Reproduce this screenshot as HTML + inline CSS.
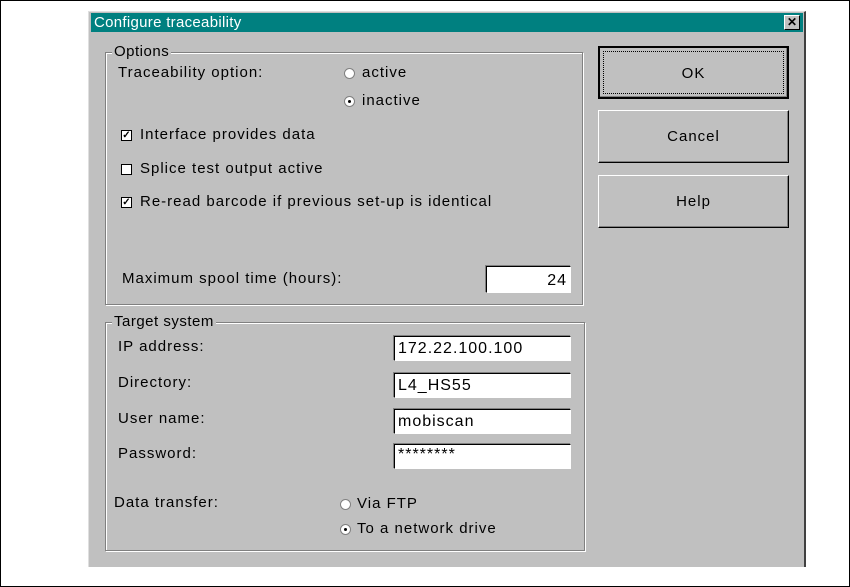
<!DOCTYPE html>
<html><head><style>
body{margin:0;width:850px;height:587px;background:#fff;position:relative;overflow:hidden;font-family:"Liberation Sans",Arial,sans-serif;font-size:15px;letter-spacing:1px;color:#000}
.frame{position:absolute;left:0;top:0;width:848px;height:585px;border:1px solid #000}
.dlg{position:absolute;left:88px;top:11px;width:715px;height:555px;background:#c0c0c0;border-left:1px solid #dfdfdf;border-top:1px solid #dfdfdf;border-right:2px solid #404040}
.title{position:absolute;left:2px;top:1px;width:712px;height:19px;background:#008080;color:#fff;font-size:15px;letter-spacing:0.3px;line-height:19px;padding-left:3px;box-sizing:border-box}
.x{position:absolute;right:3px;top:2px;width:14px;height:13px;background:#c0c0c0;border:1px solid;border-color:#fff #000 #000 #fff;color:#000;font-size:12px;letter-spacing:0;line-height:13px;text-align:center;font-weight:bold}
.grp{position:absolute;border:1px solid #808080;box-shadow:1px 1px 0 #fff, inset 1px 1px 0 #fff}
.leg{position:absolute;background:#c0c0c0;padding:0 2px;top:-9px;left:6px;line-height:16px;letter-spacing:0.5px}
.t{position:absolute;white-space:nowrap;line-height:20px}
.rb{position:absolute;width:11px;height:11px;border-radius:50%;background:#fff;border:1px solid #808080;box-sizing:border-box}
.rb.on::after{content:"";position:absolute;left:3px;top:3px;width:3px;height:3px;background:#000;border-radius:50%}
.cb{position:absolute;width:11px;height:11px;background:#fff;border:1px solid #000;box-sizing:border-box;font-size:10px;letter-spacing:0;line-height:9px;text-align:center;font-weight:bold}
.ed{position:absolute;background:#fff;border:1px solid;border-color:#000 #fff #fff #000;box-shadow:-1px -1px 0 #808080;box-sizing:border-box;line-height:24px;padding:0 3px;font-size:16px;letter-spacing:1px}
.btn{position:absolute;width:191px;height:53px;background:#c0c0c0;border:1px solid;border-color:#fff #000 #000 #fff;box-shadow:inset -1px -1px 0 #808080;box-sizing:border-box;text-align:center;line-height:51px}
</style></head><body>
<div class="frame"></div>
<div class="dlg">
<div class="title">Configure traceability<div class="x">✕</div></div>
</div>
<div class="grp" style="left:105px;top:52px;width:476px;height:251px"><span class="leg" style="left:6px">Options</span></div>
<div class="t" style="left:118px;top:63px">Traceability option:</div>
<div class="rb" style="left:344px;top:68px"></div><div class="t" style="left:362px;top:63px">active</div>
<div class="rb on" style="left:344px;top:96px"></div><div class="t" style="left:362px;top:91px">inactive</div>
<div class="cb" style="left:121px;top:130px">✓</div><div class="t" style="left:140px;top:125px">Interface provides data</div>
<div class="cb" style="left:121px;top:164px"></div><div class="t" style="left:140px;top:159px">Splice test output active</div>
<div class="cb" style="left:121px;top:197px">✓</div><div class="t" style="left:140px;top:192px">Re-read barcode if previous set-up is identical</div>
<div class="t" style="left:122px;top:269px">Maximum spool time (hours):</div>
<div class="ed" style="left:486px;top:266px;width:85px;height:27px;text-align:right;line-height:27px">24</div>
<div class="grp" style="left:105px;top:322px;width:478px;height:227px"><span class="leg">Target system</span></div>
<div class="t" style="left:118px;top:337px">IP address:</div>
<div class="ed" style="left:394px;top:336px;width:177px;height:25px">172.22.100.100</div>
<div class="t" style="left:118px;top:373px">Directory:</div>
<div class="ed" style="left:394px;top:373px;width:177px;height:25px">L4_HS55</div>
<div class="t" style="left:118px;top:409px">User name:</div>
<div class="ed" style="left:394px;top:409px;width:177px;height:25px">mobiscan</div>
<div class="t" style="left:118px;top:444px">Password:</div>
<div class="ed" style="left:394px;top:444px;width:177px;height:25px;line-height:20px">********</div>
<div class="t" style="left:114px;top:493px">Data transfer:</div>
<div class="rb" style="left:340px;top:499px"></div><div class="t" style="left:357px;top:494px">Via FTP</div>
<div class="rb on" style="left:340px;top:524px"></div><div class="t" style="left:357px;top:519px">To a network drive</div>
<div class="btn" style="left:598px;top:46px;border:2px solid #000;outline:1px dotted #000;outline-offset:-6px">OK</div>
<div class="btn" style="left:598px;top:110px">Cancel</div>
<div class="btn" style="left:598px;top:175px">Help</div>
</body></html>
